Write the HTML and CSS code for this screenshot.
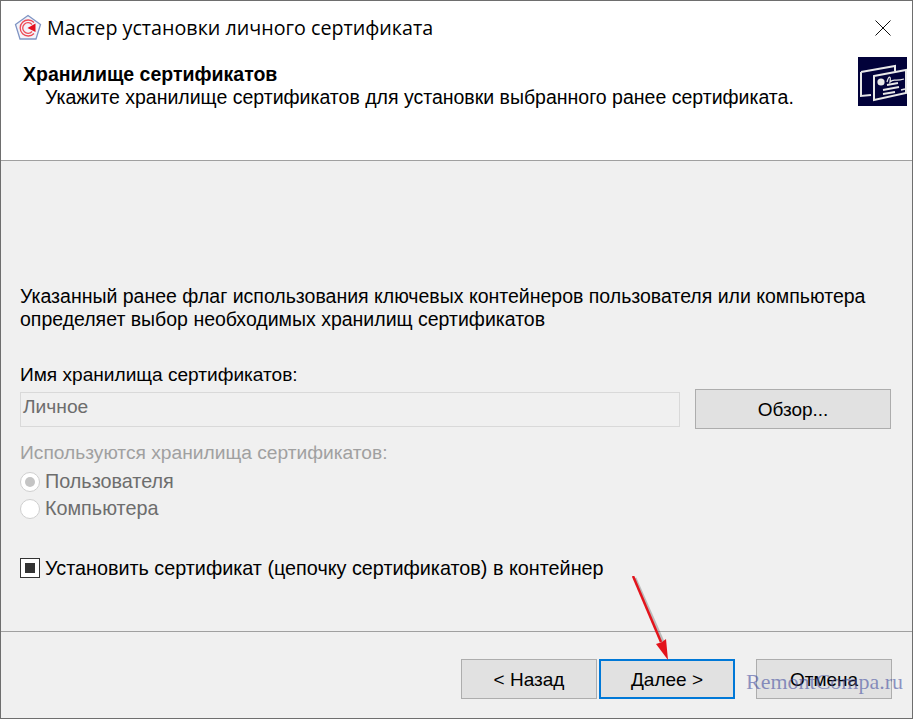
FILE: index.html
```html
<!DOCTYPE html>
<html lang="ru">
  <head>
    <meta charset="UTF-8" />
    <title>Мастер установки личного сертификата</title>
    <link rel="stylesheet" href="styles.css">
  </head>
  <body>
    <div class="window">
      <div class="titlebar">
        <svg class="app-icon" width="28" height="28" viewBox="0 0 28 28">
          <path d="M14 1.5 26.5 10.5 22 25H6L1.5 10.5Z" fill="#f4f4fa" stroke="#8095c4" stroke-width="1.3"/>
          <path d="M20 8.5A8 8 0 1 0 20 19.5" fill="none" stroke="#ee4a55" stroke-width="1.3"/>
          <path d="M18 10.5A5.3 5.3 0 1 0 18 17.5" fill="none" stroke="#ee4a55" stroke-width="1.3"/>
          <path d="M21.5 9.5V18L13.5 14Z" fill="#e3101f"/>
        </svg>
        <span class="title">Мастер установки личного сертификата</span>
        <svg class="close-icon" width="16" height="16" viewBox="0 0 16 16">
          <path d="M.5.5 15.5 15.5M15.5.5.5 15.5" stroke="#111" stroke-width="1" fill="none"/>
        </svg>
      </div>

      <div class="header">
        <div class="header-text">
          <div class="header-title">Хранилище сертификатов</div>
          <div class="header-sub">Укажите хранилище сертификатов для установки выбранного ранее сертификата.</div>
        </div>
        <svg class="header-icon" width="49" height="49" viewBox="0 0 49 49">
          <rect width="49" height="49" fill="#02023a"/>
          <path d="M3 15 37 9V14M13 38 3 39V15" fill="none" stroke="#e8e8e8" stroke-width="2"/>
          <path d="M16 19 48 13V36L16 43Z" fill="#02023a" stroke="#e8e8e8" stroke-width="2"/>
          <circle cx="23" cy="25" r="3.6" fill="#e8e8e8"/>
          <path d="M29 25C31 18 33 19 32 25 36 21 36 25 46 22" fill="none" stroke="#e8e8e8" stroke-width="1.3"/>
          <path d="M29 28 40 26M25 33 41 30M25 37 37 35M43 33 47 32" fill="none" stroke="#e8e8e8" stroke-width="1.8"/>
        </svg>
      </div>

      <div class="content">
        <p class="intro">Указанный ранее флаг использования ключевых контейнеров пользователя или компьютера определяет выбор необходимых хранилищ сертификатов</p>

        <div class="store-label">Имя хранилища сертификатов:</div>
        <div class="store-row">
          <div class="store-input">Личное</div>
          <button class="btn btn-browse">Обзор...</button>
        </div>

        <div class="group-label">Используются хранилища сертификатов:</div>
        <div class="radio-row"><span class="radio checked"></span>Пользователя</div>
        <div class="radio-row"><span class="radio"></span>Компьютера</div>

        <div class="check-row"><span class="checkbox"></span>Установить сертификат (цепочку сертификатов) в контейнер</div>
      </div>

      <div class="footer">
        <button class="btn">&lt; Назад</button>
        <button class="btn btn-default">Далее &gt;</button>
        <button class="btn btn-cancel">Отмена</button>
      </div>

      <svg class="arrow" width="60" height="90" viewBox="0 0 60 90">
        <path d="M4 2 33 68" stroke="#000" stroke-opacity=".22" stroke-width="3" fill="none"/>
        <path d="M2 0 30 66" stroke="#e3141c" stroke-width="2.5" fill="none"/>
        <path d="M37 84 25 68 31 66 35 63Z" fill="#e3141c"/>
      </svg>
      <div class="watermark">RemontCompa.ru</div>
    </div>
  </body>
</html>
```

FILE: styles.css
```css
* {
  box-sizing: border-box;
}

body {
  margin: 0;
  font-family: "Liberation Sans", Arial, sans-serif;
  font-size: 19.5px;
  color: #000;
}

.window {
  position: relative;
  width: 913px;
  height: 719px;
  overflow: hidden;
  display: flex;
  flex-direction: column;
  background-color: #f0f0f0;
  border: 1px solid #6e6e6e;
}

.titlebar {
  height: 45px;
  flex-shrink: 0;
  display: flex;
  align-items: center;
  padding: 8px 21px 0 13px;
  background-color: #fff;
}

.app-icon {
  margin-right: 5px;
}

.title {
  flex: 1;
  font-family: "Open Sans", sans-serif;
  font-size: 19.7px;
}

.header {
  height: 115px;
  flex-shrink: 0;
  display: flex;
  justify-content: space-between;
  padding: 17px 5px 0 22px;
  background-color: #fff;
  border-bottom: 1px solid #a0a0a0;
}

.header-title {
  font-weight: 700;
  line-height: 23px;
}

.header-sub {
  padding-left: 22px;
  line-height: 23px;
}

.header-icon {
  margin-top: -6px;
}

.content {
  flex: 1;
  padding: 124px 21px 0 19px;
  border-bottom: 1px solid #a0a0a0;
}

.intro {
  margin: 0 0 32px;
  line-height: 23px;
}

.store-label {
  font-size: 19.1px;
  line-height: 23px;
  margin-bottom: 3px;
}

.store-row {
  display: flex;
  align-items: center;
  gap: 15px;
  margin-bottom: 12px;
}

.store-input {
  width: 660px;
  height: 35px;
  padding-left: 2px;
  font-size: 19.2px;
  line-height: 28px;
  color: #6d6d6d;
  border: 1px solid #d9d9d9;
}

.group-label {
  font-size: 19.2px;
  line-height: 23px;
  color: #a0a0a0;
  margin-bottom: 4px;
}

.radio-row {
  display: flex;
  align-items: center;
  height: 27px;
  font-size: 19.8px;
  color: #6d6d6d;
}

.radio {
  width: 20px;
  height: 20px;
  margin-right: 5px;
  border: 1px solid #cfcfcf;
  border-radius: 50%;
  background-color: #fff;
  display: flex;
  align-items: center;
  justify-content: center;
}

.radio.checked::after {
  content: "";
  width: 10px;
  height: 10px;
  border-radius: 50%;
  background-color: #c4c4c4;
}

.check-row {
  display: flex;
  align-items: center;
  height: 24px;
  margin-top: 34px;
  font-size: 19.8px;
}

.checkbox {
  width: 20px;
  height: 20px;
  margin-right: 5px;
  border: 1px solid #333;
  background-color: #fff;
  display: flex;
  align-items: center;
  justify-content: center;
}

.checkbox::after {
  content: "";
  width: 10px;
  height: 10px;
  background-color: #333;
}

.footer {
  height: 86px;
  flex-shrink: 0;
  display: flex;
  align-items: flex-start;
  padding: 27px 20px 0 460px;
}

.btn {
  width: 136px;
  height: 40px;
  padding: 2px 0 0;
  font-family: inherit;
  font-size: 19px;
  color: #000;
  background-color: #e1e1e1;
  border: 1px solid #adadad;
}

.btn-browse {
  width: 196px;
  height: 40px;
}

.btn-default {
  margin-left: 2px;
  border: 2px solid #0078d7;
}

.btn-cancel {
  margin-left: 21px;
}

.arrow {
  position: absolute;
  left: 630px;
  top: 575px;
}

.watermark {
  position: absolute;
  left: 745px;
  top: 668px;
  font-family: "Liberation Serif", serif;
  font-size: 22px;
  color: rgba(70, 80, 160, 0.6);
}
```
